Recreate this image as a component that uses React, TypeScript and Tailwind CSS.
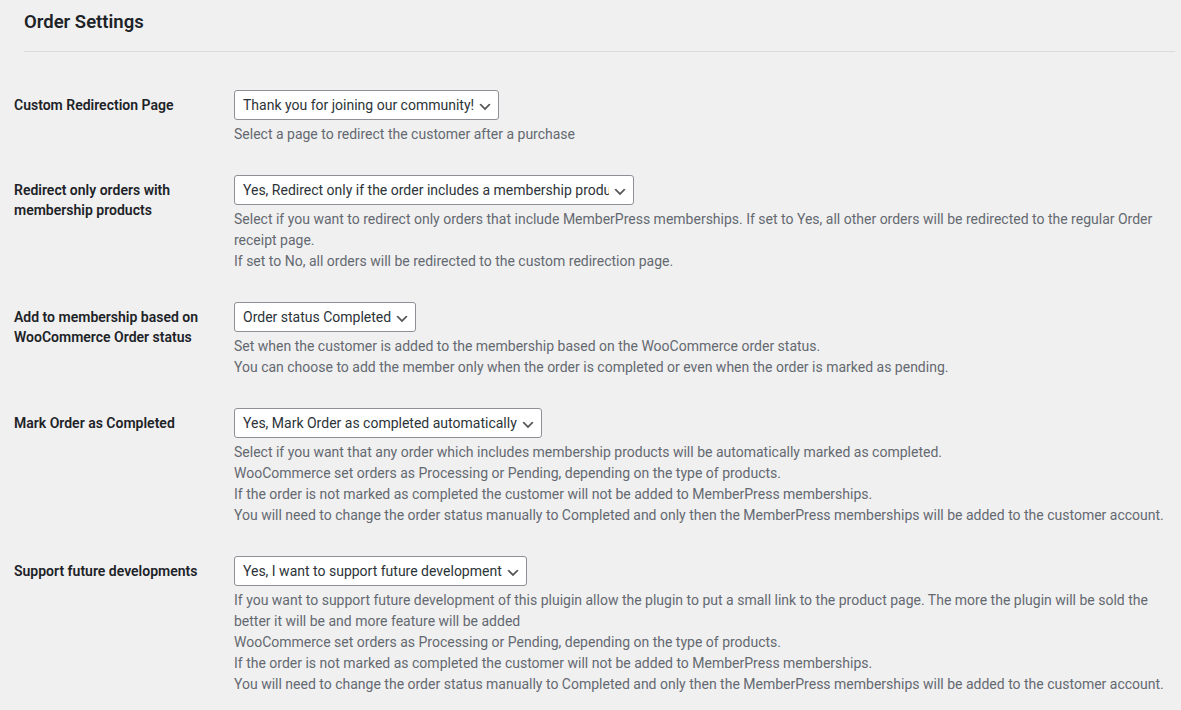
type Row = {
  label: string[]
  value: string
  help: string[]
}

const rows: Row[] = [
  {
    label: ['Custom Redirection Page'],
    value: 'Thank you for joining our community!',
    help: ['Select a page to redirect the customer after a purchase'],
  },
  {
    label: ['Redirect only orders with', 'membership products'],
    value: 'Yes, Redirect only if the order includes a membership product',
    help: [
      'Select if you want to redirect only orders that include MemberPress memberships. If set to Yes, all other orders will be redirected to the regular Order receipt page.',
      'If set to No, all orders will be redirected to the custom redirection page.',
    ],
  },
  {
    label: ['Add to membership based on', 'WooCommerce Order status'],
    value: 'Order status Completed',
    help: [
      'Set when the customer is added to the membership based on the WooCommerce order status.',
      'You can choose to add the member only when the order is completed or even when the order is marked as pending.',
    ],
  },
  {
    label: ['Mark Order as Completed'],
    value: 'Yes, Mark Order as completed automatically',
    help: [
      'Select if you want that any order which includes membership products will be automatically marked as completed.',
      'WooCommerce set orders as Processing or Pending, depending on the type of products.',
      'If the order is not marked as completed the customer will not be added to MemberPress memberships.',
      'You will need to change the order status manually to Completed and only then the MemberPress memberships will be added to the customer account.',
    ],
  },
  {
    label: ['Support future developments'],
    value: 'Yes, I want to support future development',
    help: [
      'If you want to support future development of this pluigin allow the plugin to put a small link to the product page. The more the plugin will be sold the better it will be and more feature will be added',
      'WooCommerce set orders as Processing or Pending, depending on the type of products.',
      'If the order is not marked as completed the customer will not be added to MemberPress memberships.',
      'You will need to change the order status manually to Completed and only then the MemberPress memberships will be added to the customer account.',
    ],
  },
]

function Chevron() {
  return (
    <svg viewBox="0 0 20 20" className="absolute right-[5px] top-[8px] h-[16px] w-[16px]" fill="#555">
      <path d="M5 6l5 5 5-5 2 1-7 7-7-7z" />
    </svg>
  )
}

function FakeSelect({ value }: { value: string }) {
  return (
    <div className="relative flex h-[30px] w-fit max-w-[400px] rounded-[3px] border border-[#8c8f94] bg-white pl-[8px] pr-[24px]">
      <div className="min-w-0 flex-1 overflow-hidden whitespace-nowrap text-[14px] leading-[28px] text-[#2c3338]">
        {value}
      </div>
      <Chevron />
    </div>
  )
}

export default function App() {
  return (
    <div className="min-h-[710px] bg-[#f0f0f1] pl-[14px] pr-[6px] font-['Roboto',sans-serif]">
      <div className="ml-[10px] border-b border-[#dcdcde] pt-[9px] pb-[16px]">
        <h2 className="text-[18.5px] font-semibold leading-[26px] text-[#1d2327]">Order Settings</h2>
      </div>

      <div className="mt-[23px] flex flex-col">
        {rows.map(row => (
          <div key={row.value} className="flex">
            <div className="w-[210px] shrink-0 py-[20px] pr-[10px] text-[14px] font-semibold leading-[20px] text-[#1d2327]">
              {row.label.map(l => <div key={l}>{l}</div>)}
            </div>
            <div className="flex-1 px-[10px] py-[15px]">
              <FakeSelect value={row.value} />
              <div className="mt-[4px] text-[14px] leading-[21px] text-[#646970]">
                {row.help.map(h => <p key={h}>{h}</p>)}
              </div>
            </div>
          </div>
        ))}
      </div>
    </div>
  )
}
